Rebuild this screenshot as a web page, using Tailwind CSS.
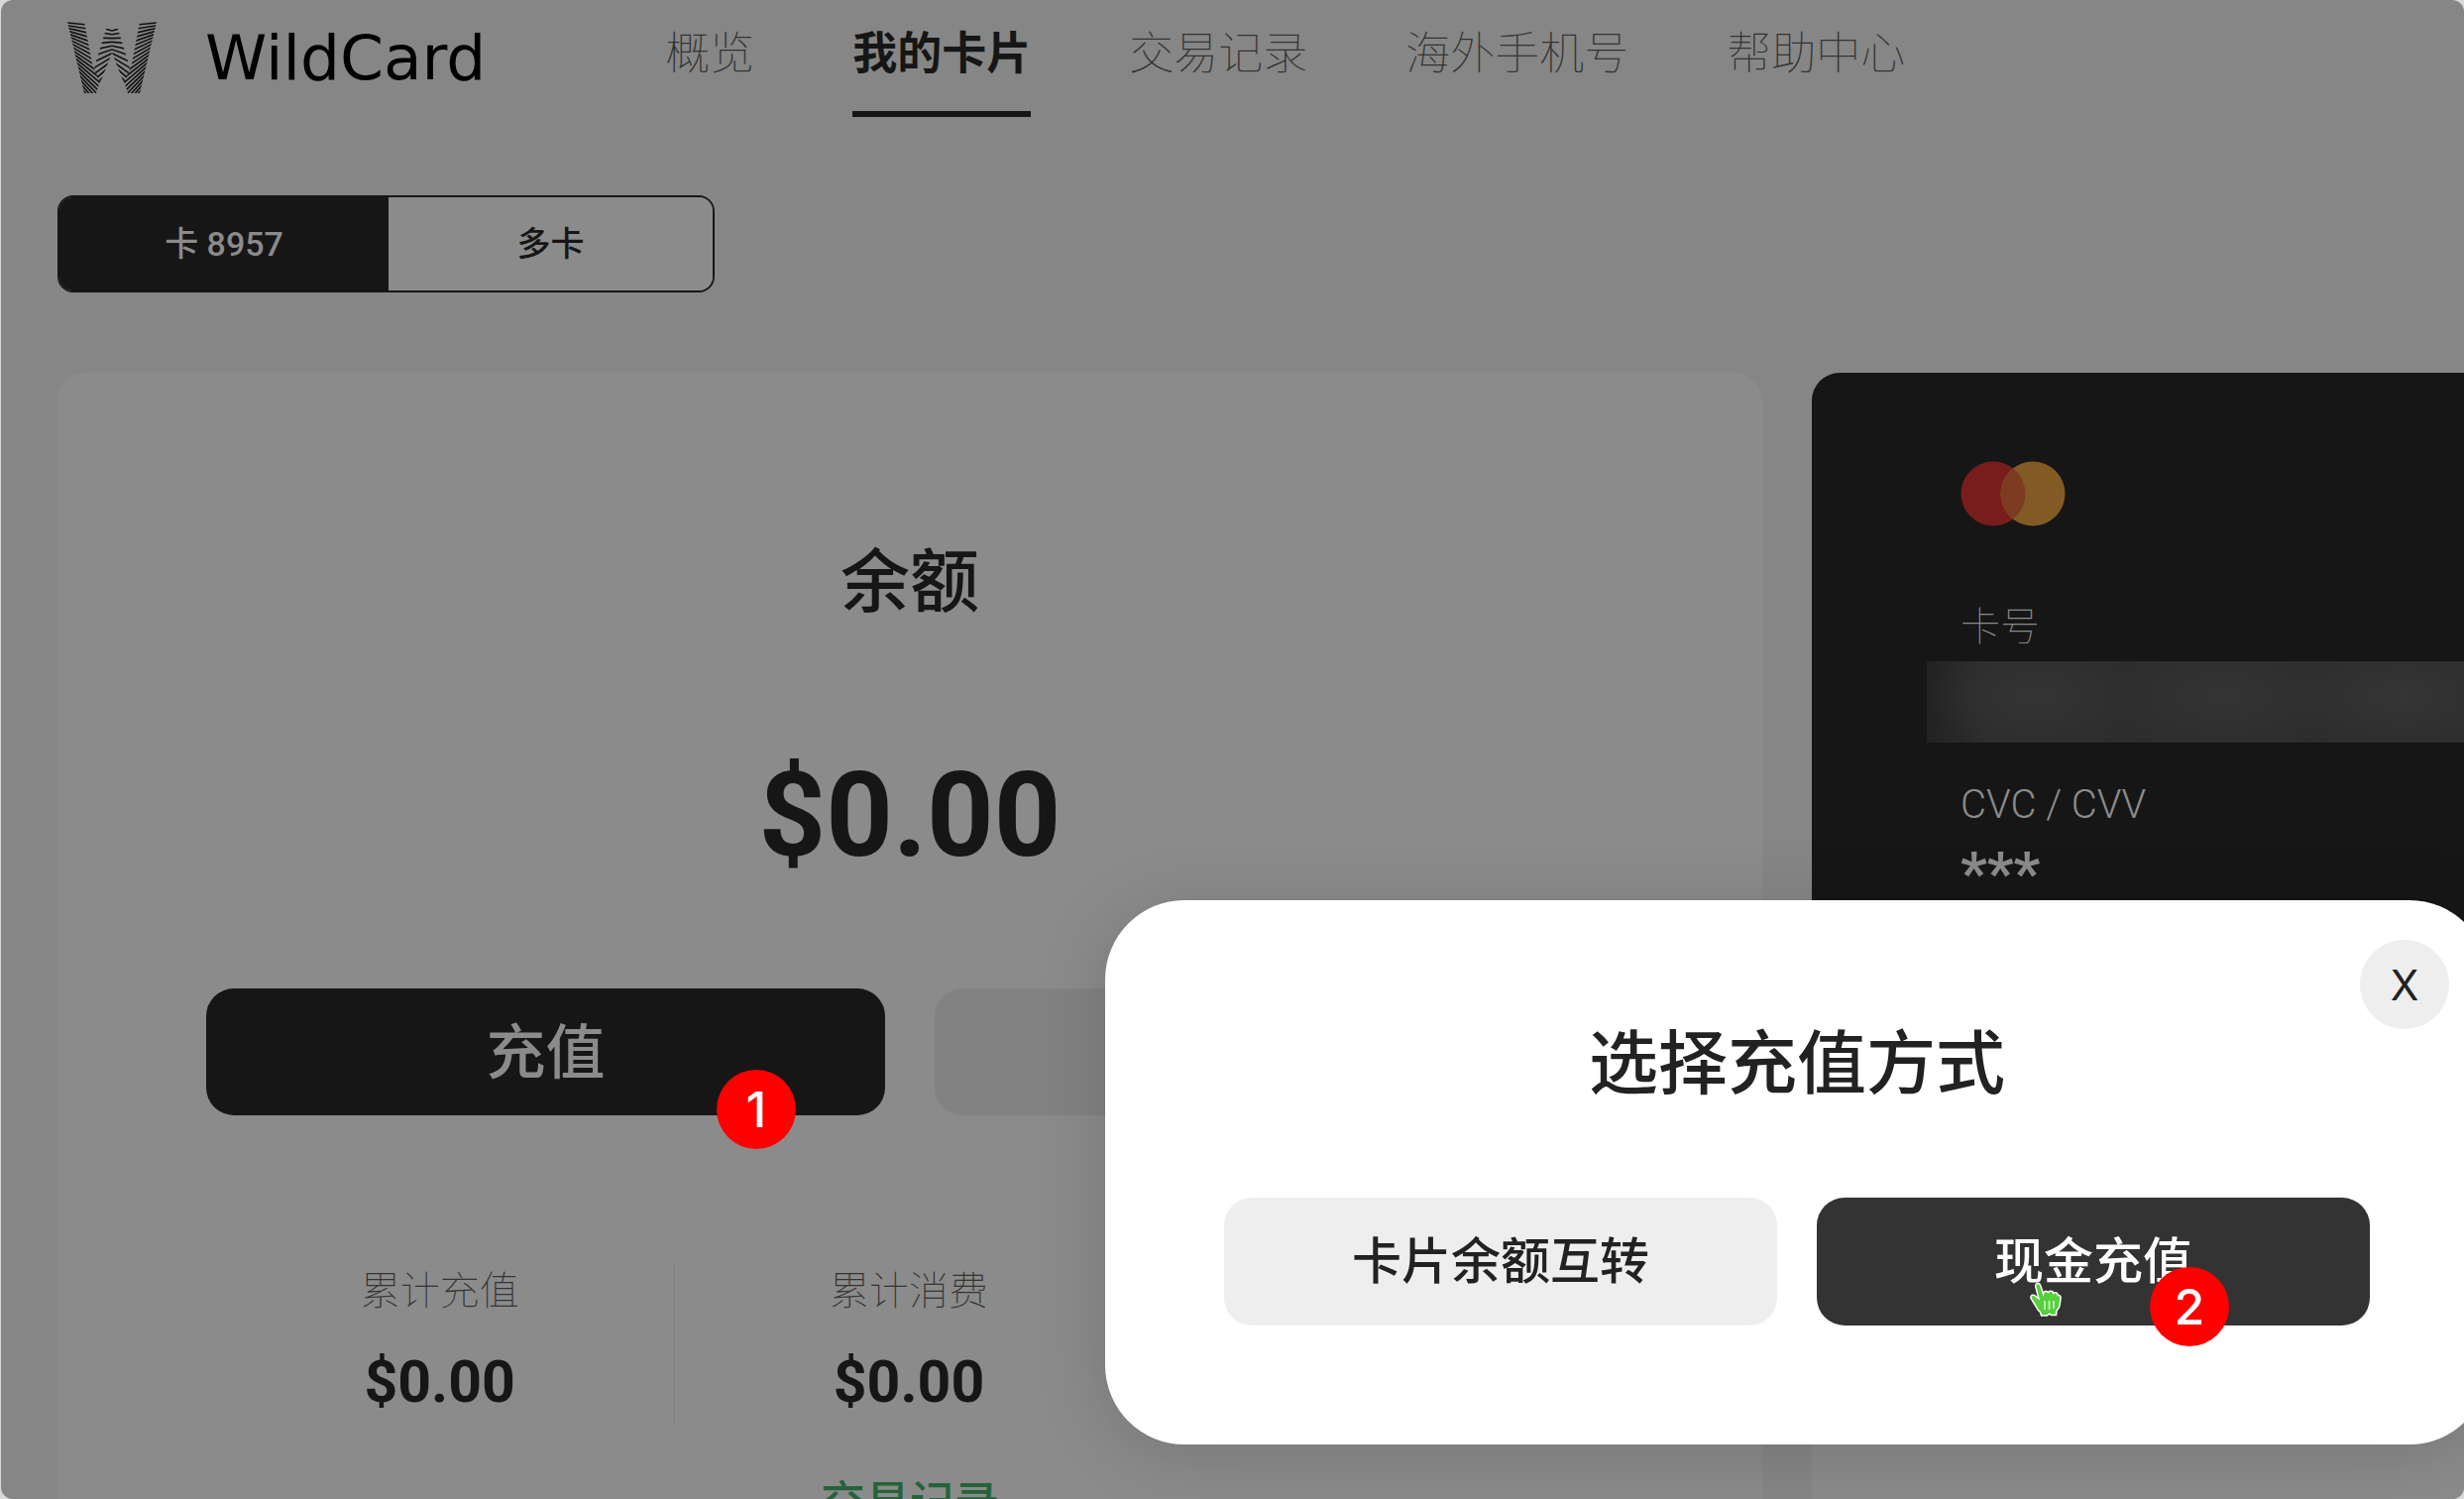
<!DOCTYPE html>
<html lang="zh-CN">
<head>
    <meta charset="UTF-8">
    <meta name="viewport" content="width=device-width, initial-scale=1.0">
    <title>WildCard - 我的卡片</title>
    <script src="https://cdn.jsdelivr.net/npm/@tailwindcss/browser@4"></script>
</head>
<body class="bg-[#d8d8d8] h-screen overflow-hidden font-[Roboto,'Noto_Sans_CJK_SC',sans-serif] text-[#161616]">
    <div class="relative h-full ml-px rounded-xl bg-[#868686] overflow-hidden">
        <!-- top bar -->
        <header class="flex items-start h-[157px] pl-[67px]">
            <a href="#" class="flex items-start text-black">
                <svg id="logo" class="w-[90px] h-[72px] mt-[22px]" viewBox="0 0 90 72" fill="none" stroke="#111" stroke-width="1.6">
                    <defs>
                        <clipPath id="armLeft"><path d="M0 0H17L25 42L28 50L33 60L29 72H17Z"/></clipPath>
                        <clipPath id="armRight"><path d="M90 0H73L65 42L62 50L57 60L61 72H73Z"/></clipPath>
                        <clipPath id="midLeft"><path d="M39 7H45V31L33 62L28 51L27 46Z"/></clipPath>
                        <clipPath id="midRight"><path d="M51 7H45V31L57 62L62 51L63 46Z"/></clipPath>
                    </defs>
                    <g clip-path="url(#armLeft)"></g>
                    <g clip-path="url(#armRight)"></g>
                    <g clip-path="url(#midLeft)"></g>
                    <g clip-path="url(#midRight)"></g>
                </svg>
                <span class="ml-[49px] mt-[24px] font-['DejaVu_Sans',sans-serif] text-[63px] leading-[70px]">WildCard</span>
            </a>
            <nav class="flex gap-[99px] ml-[181px] mt-[23px] text-[45px] leading-[64px] font-thin text-[#333]">
                <a href="#">概览</a>
                <a href="#" class="h-[95px] border-b-[6px] border-[#161616] font-bold text-[#161616]">我的卡片</a>
                <a href="#">交易记录</a>
                <a href="#">海外手机号</a>
                <a href="#">帮助中心</a>
            </nav>
        </header>

        <main class="px-[57px] pt-10">
            <!-- card tabs -->
            <div class="flex w-[663px] h-[98px] border-2 border-[#161616] rounded-2xl overflow-hidden text-[34px] font-medium">
                <button class="w-[332px] bg-[#161616] text-[#8b8b8b]">卡 8957</button>
                <button class="flex-1 bg-[#8b8b8b]">多卡</button>
            </div>

            <div class="flex items-start gap-[50px] mt-[81px]">
                <!-- balance -->
                <section class="w-[1720px] h-[1200px] shrink-0 px-[150px] pt-[162px] rounded-[28px] bg-[#8b8b8b] text-center">
                    <h1 class="text-[70px] leading-[100px] font-medium">余额</h1>
                    <p class="mt-[115px] text-[118px] leading-[140px] font-bold">$0.00</p>
                    <div class="grid grid-cols-2 gap-[50px] mt-[104px] text-[60px] font-medium">
                        <button class="relative h-32 pt-1 rounded-[28px] bg-[#161616] text-[#8b8b8b]">
                            充值
                            <span class="absolute right-[90px] -bottom-[34px] size-20 rounded-full bg-[#f00] font-[Inter,sans-serif] text-[50px] leading-20 text-white">1</span>
                        </button>
                        <button aria-label="提现" class="h-32 rounded-[28px] bg-[#828282]"></button>
                    </div>
                    <dl class="grid grid-cols-3 mt-[150px] divide-x-2 divide-[#858585]">
                        <div class="h-40">
                            <dt class="text-[40px] leading-[56px] font-thin text-[#333]">累计充值</dt>
                            <dd class="mt-7 text-[59px] leading-[70px] font-bold">$0.00</dd>
                        </div>
                        <div class="h-40">
                            <dt class="text-[40px] leading-[56px] font-thin text-[#333]">累计消费</dt>
                            <dd class="mt-7 text-[59px] leading-[70px] font-bold">$0.00</dd>
                        </div>
                        <div class="h-40"></div>
                    </dl>
                    <a href="#" class="inline-block mt-[50px] text-[45px] leading-[64px] font-medium text-[#25633a]">交易记录</a>
                </section>

                <!-- card face -->
                <section class="w-[1100px] h-[1200px] shrink-0 rounded-[28px] bg-[#8b8b8b]">
                    <div class="h-[700px] pl-[150px] pt-[89px] rounded-[28px] bg-[#161616] text-[#8b8b8b]">
                        <svg class="w-[106px] h-[66px]" viewBox="0 0 106 66">
                            <circle cx="33" cy="33" r="32.5" fill="#771e1c"/>
                            <circle cx="73" cy="33" r="32.5" fill="#825b24"/>
                            <path d="M53 7.400A32.500 32.500 0 0 1 53 58.600A32.500 32.500 0 0 1 53 7.400Z" fill="#7d3c21"/>
                        </svg>
                        <p class="mt-[72px] text-[40px] leading-[60px] font-thin">卡号</p>
                        <div class="-ml-[34px] mt-1 h-[82px] bg-[#292929] bg-[radial-gradient(ellipse_110px_60px_at_110px_35px,#343434,transparent),radial-gradient(ellipse_120px_60px_at_300px_35px,#343434,transparent),radial-gradient(ellipse_120px_60px_at_480px_35px,#353535,transparent),linear-gradient(to_right,#222,#2d2d2d_60px)]"></div>
                        <p class="mt-[39px] text-[40px] leading-[48px] font-light">CVC / CVV</p>
                        <p class="mt-3 text-[59px] leading-[66px] font-bold">***</p>
                    </div>
                </section>
            </div>
        </main>

        <!-- recharge dialog, runs past the right edge -->
        <div role="dialog" aria-labelledby="dialogTitle" class="absolute left-[1114px] top-[908px] w-[1396px] px-[120px] pt-[116px] pb-[120px] rounded-[80px] bg-white shadow-[0_10px_70px_rgba(0,0,0,0.15)]">
            <button aria-label="关闭" class="absolute top-10 right-10 size-[90px] rounded-full bg-[#eee] font-[Inter,sans-serif] text-[42px] text-[#222]">X</button>
            <h2 id="dialogTitle" class="text-center text-[70px] leading-[100px] font-medium text-[#222]">选择充值方式</h2>
            <div class="grid grid-cols-2 gap-10 mt-[84px] text-[50px] font-medium">
                <button class="h-[129px] pt-[2px] rounded-[28px] bg-[#eee] text-[#222]">卡片余额互转</button>
                <button class="relative h-[129px] pt-[2px] rounded-[28px] bg-[#333] text-white">
                    现金充值
                    <span class="absolute right-[142px] -bottom-[21px] size-20 rounded-full bg-[#f00] font-[Inter,sans-serif] text-[50px] leading-20">2</span>
                    <svg class="absolute left-[214px] top-[85px] w-[34px] h-[36px]" viewBox="0 0 34 36">
                        <path d="M7.500 2C9 .8 11 1.500 11.700 3.500L14.500 12C15 9.500 17.500 8.500 19.500 10.500C21.500 8.500 24 9 24.800 11.500C27 10 29 11 29.300 13.500C31.500 13 32.500 14.500 32 17L31 24C30.800 26.500 29 27.500 28 29L27.500 33.500H22.500L20.500 32.200L18.500 34H12.500L11.500 30.500C8.500 29 7.500 25 5.500 22L2 16.500C1.500 14 3 12.500 5.500 13.500L10 17L6.800 5C6.500 4 6.700 2.700 7.500 2Z" fill="#57cf3f" stroke="#fff" stroke-width="1.500"/>
                        <path d="M16 19V28M20.500 19V28M25 19V27" stroke="#d8f5d0" stroke-width="1.500"/>
                    </svg>
                </button>
            </div>
        </div>
    </div>
    <script>
        // hatch lines of the W mark
        const groups = document.querySelectorAll('#logo g');
        const hatch = [
            { from: 0, to: 34, count: 24, top: 1, step: 2.7, slope: t => 0.1 + t * 1.5 },
            { from: 90, to: 56, count: 24, top: 1, step: 2.7, slope: t => 0.1 + t * 1.5 },
            { from: 45, to: 20, count: 14, top: 9, step: 3.8, slope: t => -0.3 + t * 1.8 },
            { from: 45, to: 70, count: 14, top: 9, step: 3.8, slope: t => -0.3 + t * 1.8 }
        ];
        hatch.forEach((h, i) => {
            let d = '';
            for (let n = 0; n < h.count; n++) {
                const y = h.top + n * h.step;
                d += `M${h.from} ${y}L${h.to} ${y + Math.abs(h.to - h.from) * h.slope(n / h.count)}`;
            }
            const path = document.createElementNS('http://www.w3.org/2000/svg', 'path');
            path.setAttribute('d', d);
            groups[i].appendChild(path);
        });
    </script>
</body>
</html>
